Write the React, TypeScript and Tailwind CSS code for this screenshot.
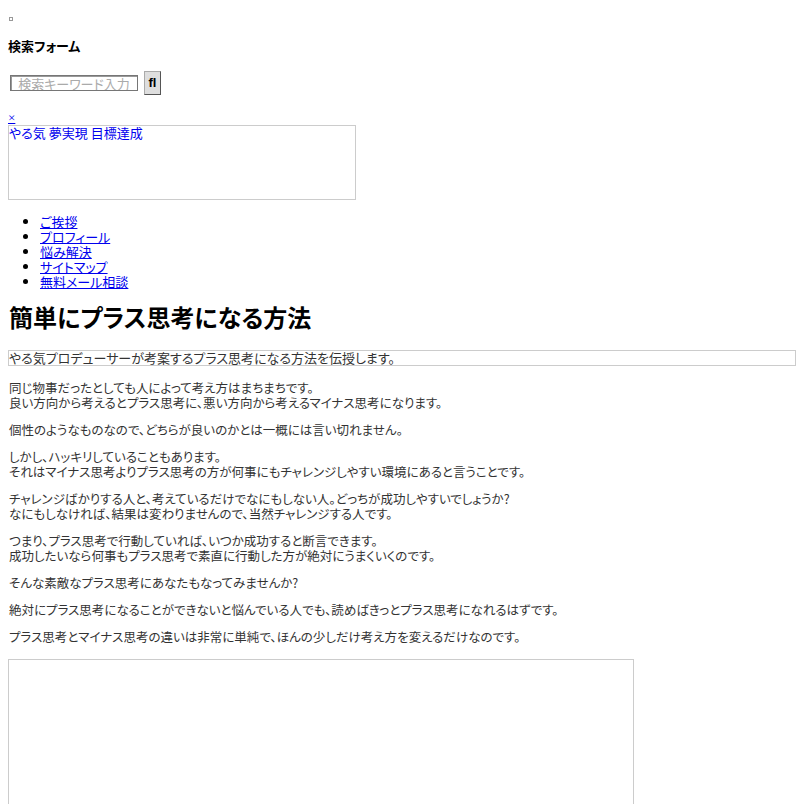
import React from "react";

export default function App() {
  const font = "[font-family:'Liberation_Serif','Noto_Sans_CJK_JP',serif]";
  return (
    <div className={`${font} text-[13px] leading-[15px] text-black bg-white min-h-[804px] px-2 [font-feature-settings:'palt']`}>
      <div className="pt-[17px] pl-px">
        <div className="w-[4px] h-[4px] border border-[#999]" />
      </div>
      <h3 className="mt-[17px] font-bold text-[13px] leading-[15px] [font-family:'Noto_Sans_CJK_JP',sans-serif]">検索フォーム</h3>
      <form className="mt-[18px] flex items-center gap-[6px] pl-[2px]" onSubmit={(e) => e.preventDefault()}>
        <input
          className="w-[128px] h-[16px] border border-[#767676] shadow-[inset_1px_1px_0_#999] px-[4px] text-[13px] leading-[14px] text-center placeholder:text-[#aaa] outline-none [font-family:'Noto_Sans_CJK_JP',sans-serif]"
          placeholder="検索キーワード入力"
        />
        <button className="w-[17px] h-[24px] bg-[#dedede] border border-[#aaa] border-r-[#555] border-b-[#555] font-bold text-[13px] leading-[22px] text-black [font-family:'Liberation_Sans',sans-serif]">
          fl
        </button>
      </form>
      <div className="mt-[15px]">
        <a href="#" className="text-[#00e] underline text-[13px] leading-[14px]">×</a>
      </div>
      <div className="w-[348px] h-[75px] border border-[#ccc] [font-family:'Noto_Sans_CJK_JP',sans-serif] text-[#00e] text-[13px] leading-[14px]">
        やる気 夢実現 目標達成
      </div>
      <ul className="mt-[14px] pl-[32px] list-disc [font-family:'Noto_Sans_CJK_JP',sans-serif]">
        {["ご挨拶", "プロフィール", "悩み解決", "サイトマップ", "無料メール相談"].map((t) => (
          <li key={t} className="leading-[15px]">
            <a href="#" className="text-[#00e] underline">{t}</a>
          </li>
        ))}
      </ul>
      <h1 className="mt-[13px] pl-px text-[24px] leading-[30px] font-bold [font-family:'Noto_Sans_CJK_JP',sans-serif]">簡単にプラス思考になる方法</h1>
      <div className="mt-[18px] border border-[#ccc] h-[16px] w-[788px] text-[13px] leading-[14px] text-[#333] [font-family:'Noto_Sans_CJK_JP',sans-serif]">
        やる気プロデューサーが考案するプラス思考になる方法を伝授します。
      </div>
      <div className="mt-[14px] pl-px text-[#333] [font-family:'Noto_Sans_CJK_JP',sans-serif] text-[12.5px] leading-[15px] flex flex-col gap-[12px]">
        <p>同じ物事だったとしても人によって考え方はまちまちです。<br />良い方向から考えるとプラス思考に、悪い方向から考えるマイナス思考になります。</p>
        <p>個性のようなものなので、どちらが良いのかとは一概には言い切れません。</p>
        <p>しかし、ハッキリしていることもあります。<br />それはマイナス思考よりプラス思考の方が何事にもチャレンジしやすい環境にあると言うことです。</p>
        <p>チャレンジばかりする人と、考えているだけでなにもしない人。どっちが成功しやすいでしょうか?<br />なにもしなければ、結果は変わりませんので、当然チャレンジする人です。</p>
        <p>つまり、プラス思考で行動していれば、いつか成功すると断言できます。<br />成功したいなら何事もプラス思考で素直に行動した方が絶対にうまくいくのです。</p>
        <p>そんな素敵なプラス思考にあなたもなってみませんか?</p>
        <p>絶対にプラス思考になることができないと悩んでいる人でも、読めばきっとプラス思考になれるはずです。</p>
        <p>プラス思考とマイナス思考の違いは非常に単純で、ほんの少しだけ考え方を変えるだけなのです。</p>
      </div>
      <div className="mt-[15px] w-[626px] h-[200px] border border-[#ccc]" />
    </div>
  );
}
